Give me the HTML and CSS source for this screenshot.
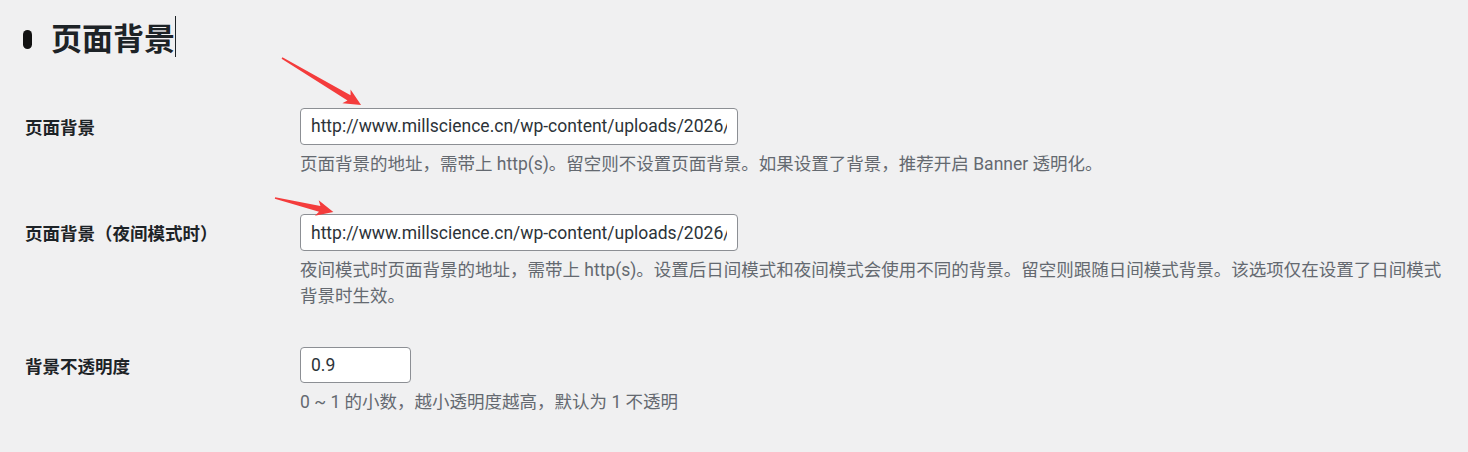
FILE: index.html
```html
<!DOCTYPE html>
<html lang="zh-CN">
<head>
<meta charset="utf-8">
<title>页面背景</title>
<link rel="stylesheet" href="styles.css">
</head>
<body>
<div class="page">
  <h2 class="section-title"><span class="marker"></span><span class="title-text">页面背景</span><span class="caret"></span></h2>
  <div class="form-table">
    <div class="row">
      <div class="label">页面背景</div>
      <div class="field">
        <input class="text-input regular" type="text" value="http://www.millscience.cn/wp-content/uploads/2026/01/bg.jpg">
        <p class="description">页面背景的地址，需带上 http(s)。留空则不设置页面背景。如果设置了背景，推荐开启 Banner 透明化。</p>
      </div>
    </div>
    <div class="row">
      <div class="label">页面背景（夜间模式时）</div>
      <div class="field">
        <input class="text-input regular" type="text" value="http://www.millscience.cn/wp-content/uploads/2026/01/bg-dark.jpg">
        <p class="description">夜间模式时页面背景的地址，需带上 http(s)。设置后日间模式和夜间模式会使用不同的背景。留空则跟随日间模式背景。该选项仅在设置了日间模式背景时生效。</p>
      </div>
    </div>
    <div class="row">
      <div class="label">背景不透明度</div>
      <div class="field">
        <input class="text-input small" type="text" value="0.9">
        <p class="description">0 ~ 1 的小数，越小透明度越高，默认为 1 不透明</p>
      </div>
    </div>
  </div>
  <svg class="arrows" width="1468" height="452" viewBox="0 0 1468 452" aria-hidden="true">
    <g transform="translate(282 58) rotate(30.75)">
      <polygon class="arrow" points="0,-0.8 78,-3 75,-8 92,0 75,8 78,3 0,0.8"/>
    </g>
    <g transform="translate(275 198) rotate(13.57)">
      <polygon class="arrow" points="0,-0.8 46,-3 43,-8 60,0 43,8 46,3 0,0.8"/>
    </g>
  </svg>
</div>
</body>
</html>
```
FILE: styles.css
```css
* { box-sizing: border-box; }
html, body {
  margin: 0;
  padding: 0;
  background: #f0f0f1;
}
body {
  font-family: Roboto, "Noto Sans CJK SC", sans-serif;
  font-size: 17.5px;
  color: #1d2327;
  width: 1468px;
  height: 452px;
  overflow: hidden;
}
.page {
  position: relative;
  padding: 16px 20px 0 25px;
}
.section-title {
  display: flex;
  align-items: center;
  height: 41px;
  margin: 0 0 32px -2px;
  font-size: 31px;
  font-weight: 700;
  line-height: 1;
  color: #1d2327;
}
.marker {
  width: 9px;
  height: 19px;
  border-radius: 5px;
  background: #111;
  margin: 6px 19px 0 0;
}
.title-text {
  margin-top: 5px;
}
.caret {
  width: 1px;
  height: 41px;
  background: #1d2327;
}
.row {
  display: grid;
  grid-template-columns: 275px 1fr;
  padding: 18.75px 0;
}
.label {
  padding-top: 9px;
  line-height: 22px;
  font-weight: 700;
  font-size: 17.5px;
  color: #1d2327;
}
.text-input {
  display: block;
  height: 37px;
  border: 1px solid #8c8f94;
  border-radius: 4px;
  background: #fff;
  padding: 0 10px;
  font-family: inherit;
  font-size: 17.5px;
  color: #2c3338;
  outline: none;
}
.text-input.regular { width: 438px; }
.text-input.small { width: 111px; height: 36px; }
.description {
  margin: 6px 0 0;
  line-height: 26px;
  color: #646970;
  font-size: 17.5px;
}
.arrows {
  position: absolute;
  left: 0;
  top: 0;
  pointer-events: none;
}
.arrow { fill: #f43c3c; }
```
